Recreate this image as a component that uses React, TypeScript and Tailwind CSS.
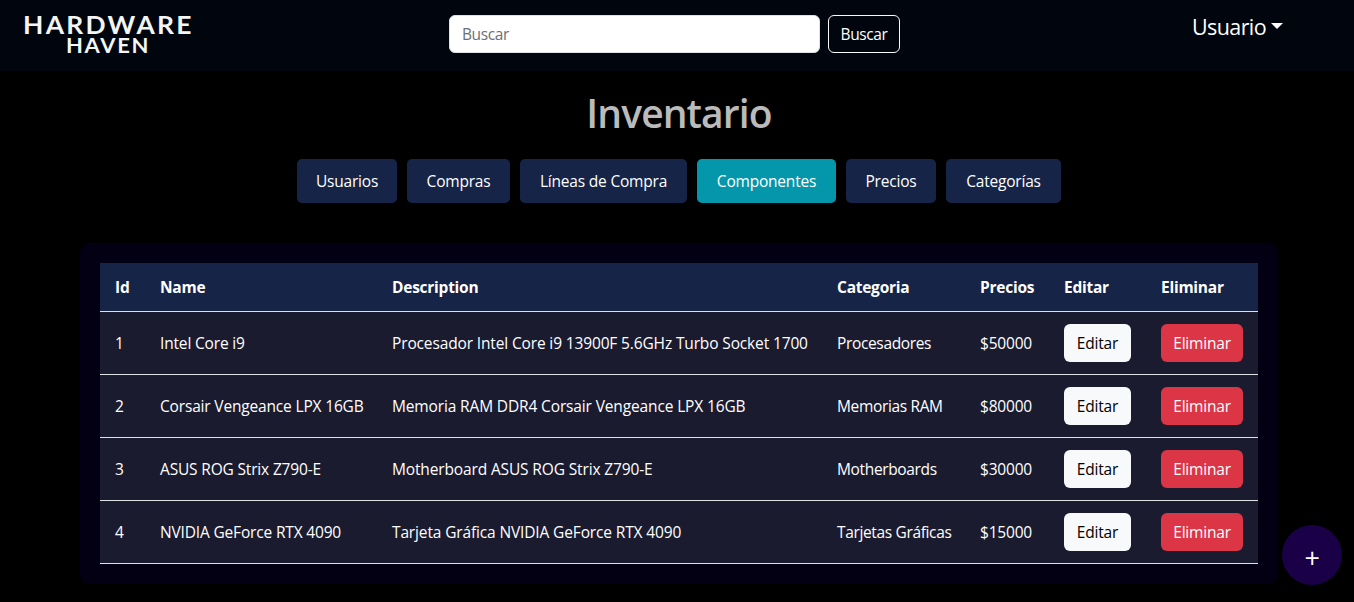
import { clsx } from "clsx";

const tabs = [
  { label: "Usuarios", width: "w-[100px]" },
  { label: "Compras", width: "w-[103px]" },
  { label: "Líneas de Compra", width: "w-[167px]" },
  { label: "Componentes", width: "w-[139px]", active: true },
  { label: "Precios", width: "w-[90px]" },
  { label: "Categorías", width: "w-[115px]" },
];

const columns = ["Id", "Name", "Description", "Categoria", "Precios", "Editar", "Eliminar"];

const components = [
  { id: 1, name: "Intel Core i9", description: "Procesador Intel Core i9 13900F 5.6GHz Turbo Socket 1700", category: "Procesadores", price: 50000 },
  { id: 2, name: "Corsair Vengeance LPX 16GB", description: "Memoria RAM DDR4 Corsair Vengeance LPX 16GB", category: "Memorias RAM", price: 80000 },
  { id: 3, name: "ASUS ROG Strix Z790-E", description: "Motherboard ASUS ROG Strix Z790-E", category: "Motherboards", price: 30000 },
  { id: 4, name: "NVIDIA GeForce RTX 4090", description: "Tarjeta Gráfica NVIDIA GeForce RTX 4090", category: "Tarjetas Gráficas", price: 15000 },
];

function Navbar() {
  return (
    <header className="flex h-[71px] items-start bg-[#00050e]">
      <div className="flex w-[449px] flex-col items-start pl-[23px] pt-[14px] font-['Lato',sans-serif] font-bold text-[#f4f6f6]">
        <span className="origin-left scale-x-110 text-2xl leading-[22px] tracking-[2.1px]">HARDWARE</span>
        <span className="ml-[43px] origin-left scale-x-107 text-[20.5px] leading-[19px] tracking-[1.6px]">HAVEN</span>
      </div>
      <form className="flex gap-2 pt-[15px]">
        <input
          type="text"
          placeholder="Buscar"
          className="h-[38px] w-[371px] rounded-md border border-[#dee2e6] bg-white px-3 text-[15.5px] tracking-[-0.4px] text-[#212529] placeholder:text-[#6c6f73]"
        />
        <button type="button" className="h-[38px] w-[72px] rounded-md border border-[#f8f9fa] text-center tracking-[-0.4px]">
          Buscar
        </button>
      </form>
      <div className="ml-[292px] flex items-center gap-[5px] pt-[10px]">
        <span className="text-[21.5px] leading-[33px] tracking-[-0.6px]">Usuario</span>
        <span className="mt-[-1px] border-x-6 border-t-6 border-x-transparent border-t-white" />
      </div>
    </header>
  );
}

function InventoryTable() {
  return (
    <table className="w-full table-fixed border-separate border-spacing-0 text-left">
      <colgroup>
        <col className="w-[45px]" />
        <col className="w-[232px]" />
        <col className="w-[445px]" />
        <col className="w-[143px]" />
        <col className="w-[84px]" />
        <col className="w-[97px]" />
        <col className="w-[112px]" />
      </colgroup>
      <thead>
        <tr className="bg-[#162447]">
          {columns.map((column) => (
            <th key={column} className="h-[49px] border-b border-[#dee2e6] px-[15px] py-0 font-bold tracking-[-0.25px]">
              {column}
            </th>
          ))}
        </tr>
      </thead>
      <tbody className="[&_td]:h-[63px] [&_td]:border-b [&_td]:border-[#dee2e6] [&_td]:px-[15px] [&_td]:py-0">
        {components.map((item) => (
          <tr key={item.id} className="whitespace-nowrap bg-[#1b1b2f]">
            <td>{item.id}</td>
            <td className="tracking-[-0.17px]">{item.name}</td>
            <td className="tracking-[-0.14px]">{item.description}</td>
            <td className="tracking-[-0.35px]">{item.category}</td>
            <td>${item.price}</td>
            <td>
              <button className="block h-[38px] w-[67px] rounded-md bg-[#f8f9fa] text-black">Editar</button>
            </td>
            <td>
              <button className="block h-[38px] w-[82px] rounded-md bg-[#dc3545]">Eliminar</button>
            </td>
          </tr>
        ))}
      </tbody>
    </table>
  );
}

export default function App() {
  return (
    <div className="h-[602px] overflow-hidden bg-black font-['Open_Sans',sans-serif] text-[15.5px] leading-6 tracking-[-0.2px] text-white">
      <Navbar />
      <main className="flex flex-col items-center pl-1">
        <h1 className="mt-[18px] text-[39px] font-semibold leading-[48px] tracking-[-0.9px] text-[#bbbbbb]">Inventario</h1>
        <nav className="mt-[22px] flex gap-2.5">
          {tabs.map((tab) => (
            <button
              key={tab.label}
              className={clsx("h-11 rounded-[5px] text-center", tab.width, tab.active ? "bg-[#0496aa]" : "bg-[#162447]")}
            >
              {tab.label}
            </button>
          ))}
        </nav>
        <section className="mt-10 w-[1198px] rounded-[10px] bg-[#030014] p-5">
          <InventoryTable />
        </section>
      </main>
      <button
        aria-label="Agregar"
        className="fixed bottom-[17px] right-3 flex size-[60px] items-center justify-center rounded-full bg-[#1a0047] pt-1.5 text-[27px]"
      >
        +
      </button>
    </div>
  );
}
